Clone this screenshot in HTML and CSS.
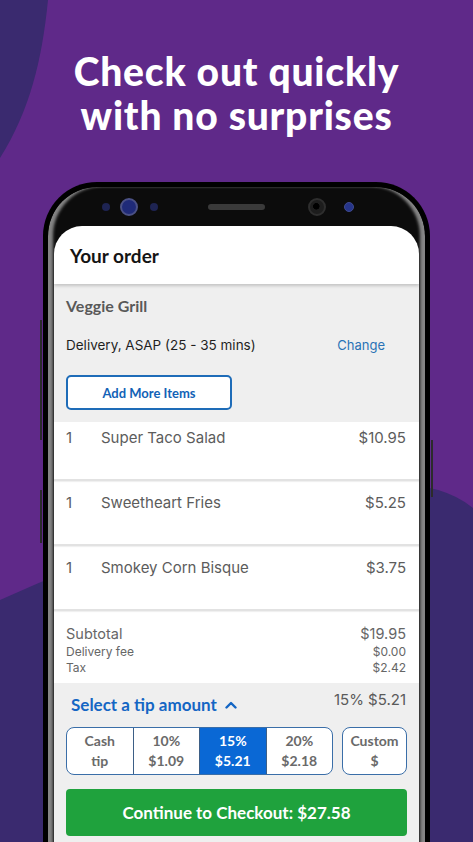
FILE: index.html
```html
<!DOCTYPE html>
<html lang="en">
<head>
  <meta charset="UTF-8">
  <meta name="viewport" content="width=device-width, initial-scale=1.0">
  <title>Check out quickly</title>
  <link rel="stylesheet" href="styles.css">
</head>
<body>
  <svg class="backdrop" width="473" height="842" viewBox="0 0 473 842" aria-hidden="true">
    <path d="M0 0 H48 C42 60 30 110 0 158 Z" fill="#3a2a6f"/>
    <path d="M0 600 Q380 430 473 508 V842 H0 Z" fill="#3a2a6f"/>
  </svg>

  <main class="page">
    <h1 class="headline">Check out quickly<br>with no surprises</h1>

    <div class="phone">
      <span class="side-key key-left-1"></span>
      <span class="side-key key-left-2"></span>
      <span class="side-key key-right"></span>

      <div class="phone-top">
        <span class="sensor dot-1"></span>
        <span class="sensor iris"></span>
        <span class="sensor dot-2"></span>
        <span class="speaker"></span>
        <span class="sensor camera"></span>
        <span class="sensor dot-3"></span>
      </div>

      <div class="screen">
        <header class="screen-header">Your order</header>

        <section class="store">
          <div class="store-name">Veggie Grill</div>
          <div class="delivery-row">
            <span>Delivery, ASAP (25 - 35 mins)</span>
            <a class="change-link">Change</a>
          </div>
          <button class="add-more">Add More Items</button>
        </section>

        <ul class="items">
          <li class="item"><span class="qty">1</span><span class="name">Super Taco Salad</span><span class="price">$10.95</span></li>
          <li class="item"><span class="qty">1</span><span class="name">Sweetheart Fries</span><span class="price">$5.25</span></li>
          <li class="item"><span class="qty">1</span><span class="name">Smokey Corn Bisque</span><span class="price">$3.75</span></li>
        </ul>

        <section class="totals">
          <div class="total-row subtotal"><span>Subtotal</span><span>$19.95</span></div>
          <div class="total-row small"><span>Delivery fee</span><span>$0.00</span></div>
          <div class="total-row small"><span>Tax</span><span>$2.42</span></div>
        </section>

        <section class="tip">
          <div class="tip-head">
            <span class="tip-title">Select a tip amount
              <svg class="chevron" width="12" height="8" viewBox="0 0 12 8"><path d="M1.5 6.5 L6 2 L10.5 6.5" fill="none" stroke="#1466c4" stroke-width="2.4" stroke-linecap="round" stroke-linejoin="round"/></svg>
            </span>
            <span class="tip-value">15% $5.21</span>
          </div>
          <div class="tip-options">
            <div class="segments">
              <div class="segment">Cash<br>tip</div>
              <div class="segment">10%<br>$1.09</div>
              <div class="segment selected">15%<br>$5.21</div>
              <div class="segment">20%<br>$2.18</div>
            </div>
            <div class="custom-tip">Custom<br>$</div>
          </div>
          <button class="checkout">Continue to Checkout: $27.58</button>
        </section>
      </div>
    </div>
  </main>
</body>
</html>
```

FILE: styles.css
```css
body {
  margin: 0;
  height: 842px;
  overflow: hidden;
  background: #5f2989;
  font-family: 'Inter', 'Liberation Sans', sans-serif;
  position: relative;
}

.backdrop {
  position: absolute;
  top: 0;
  left: 0;
}

.page {
  position: relative;
}

.headline {
  margin: 0;
  padding-top: 49px;
  font-family: 'Lato', sans-serif;
  font-weight: 900;
  font-size: 39px;
  line-height: 44px;
  letter-spacing: 0.8px;
  color: #fff;
  text-align: center;
}

/* phone frame */
.phone {
  position: relative;
  margin: 45px 0 0 43px;
  width: 365px;
  border: 5px solid #000;
  border-bottom: 0;
  border-radius: 54px 54px 0 0;
  background: #0c0c0c;
  padding: 0 6px;
  box-shadow: inset 6px 0 3px -1px #858585, inset -6px 0 3px -1px #858585;
}

.side-key {
  position: absolute;
  width: 2px;
  background: #2b2b2b;
}

.key-left-1 { left: -8px; top: 133px; height: 120px; }
.key-left-2 { left: -8px; top: 303px; height: 53px; }
.key-right { right: -8px; top: 253px; height: 57px; }

.phone-top {
  height: 39px;
  display: flex;
  align-items: center;
  padding-left: 48px;
}

.sensor {
  border-radius: 50%;
  flex-shrink: 0;
}

.dot-1, .dot-2 {
  width: 8px;
  height: 8px;
  background: #1e2452;
}

.iris {
  width: 14px;
  height: 14px;
  margin: 0 12px 0 10px;
  background: #1f2a78;
  border: 2px solid #4b5185;
}

.speaker {
  width: 57px;
  height: 6px;
  border-radius: 3px;
  background: #3a3a3a;
  margin-left: 50px;
}

.camera {
  width: 14px;
  height: 14px;
  margin-left: 43px;
  background: radial-gradient(circle at 45% 45%, #000 0 3px, #1d1d1d 3.5px);
  border: 2px solid #2e2e2e;
}

.dot-3 {
  width: 8px;
  height: 8px;
  margin-left: 18px;
  background: #26358a;
  border: 1px solid #3f4a8e;
}

/* screen */
.screen {
  background: #fff;
  border-radius: 28px 28px 0 0;
  overflow: hidden;
  height: 640px;
}

.screen-header {
  position: relative;
  z-index: 1;
  height: 58px;
  display: flex;
  align-items: center;
  padding-left: 16px;
  font-family: 'Lato', sans-serif;
  font-weight: 700;
  font-size: 19px;
  color: #141414;
  box-shadow: 0 2px 3px rgba(0, 0, 0, 0.18);
}

.store {
  background: #efefef;
  padding: 12px 13px 12px 12px;
}

.store-name {
  font-family: 'Lato', sans-serif;
  font-weight: 700;
  font-size: 16px;
  line-height: 20px;
  color: #595959;
}

.delivery-row {
  margin-top: 19px;
  display: flex;
  justify-content: space-between;
  font-size: 13.5px;
  line-height: 20px;
  color: #1f1f1f;
}

.change-link {
  margin-right: 21px;
  font-size: 13px;
  color: #2a73b6;
}

.add-more {
  margin-top: 20px;
  width: 166px;
  height: 35px;
  background: #fff;
  border: 2px solid #1e6cb8;
  border-radius: 5px;
  font-family: 'Lato', sans-serif;
  font-weight: 700;
  font-size: 13px;
  color: #1262b6;
}

.items {
  list-style: none;
  margin: 0;
  padding: 0;
}

.item {
  display: flex;
  padding: 12px 13px 31px 12px;
  font-size: 15px;
  line-height: 20px;
  color: #5c5c5c;
  border-bottom: 2px solid #e2e2e2;
  box-shadow: 0 1px 1px rgba(0, 0, 0, 0.06);
}

.item:first-child {
  padding-top: 6px;
}

.qty {
  width: 35px;
}

.name {
  flex: 1;
}

.totals {
  padding: 13px 13px 7px 12px;
  color: #666;
}

.total-row {
  display: flex;
  justify-content: space-between;
}

.subtotal {
  font-size: 14.5px;
  line-height: 20px;
}

.total-row.small {
  font-size: 12px;
  line-height: 16px;
}

.tip {
  background: #efefef;
  padding: 7px 12px 20px 12px;
}

.tip-head {
  display: flex;
  justify-content: space-between;
  align-items: flex-start;
}

.tip-title {
  margin-top: 3px;
  padding-left: 5px;
  font-family: 'Lato', sans-serif;
  font-weight: 700;
  font-size: 17px;
  line-height: 24px;
  color: #1466c4;
}

.chevron {
  margin-left: 4px;
  vertical-align: 2px;
}

.tip-value {
  margin-right: 1px;
  font-size: 15px;
  line-height: 20px;
  color: #5a5a5a;
}

.tip-options {
  margin-top: 10px;
  display: flex;
  gap: 9px;
}

.segments {
  display: flex;
  width: 267px;
  border: 1px solid #3a6ea8;
  border-radius: 8px;
  overflow: hidden;
  background: #fff;
}

.segment,
.custom-tip {
  flex: 1;
  height: 46px;
  display: flex;
  align-items: center;
  justify-content: center;
  text-align: center;
  font-family: 'Lato', sans-serif;
  font-weight: 700;
  font-size: 14px;
  line-height: 20px;
  color: #6a6a6a;
}

.segment + .segment {
  border-left: 1px solid #3d5f86;
}

.segment.selected {
  background: #0a68d5;
  color: #fff;
}

.custom-tip {
  flex: none;
  width: 63px;
  background: #fff;
  border: 1px solid #3a6ea8;
  border-radius: 8px;
}

.checkout {
  margin-top: 14px;
  width: 100%;
  height: 47px;
  border: none;
  border-radius: 4px;
  background: #1fa23d;
  color: #fff;
  font-family: 'Lato', sans-serif;
  font-weight: 700;
  font-size: 17px;
}
```
